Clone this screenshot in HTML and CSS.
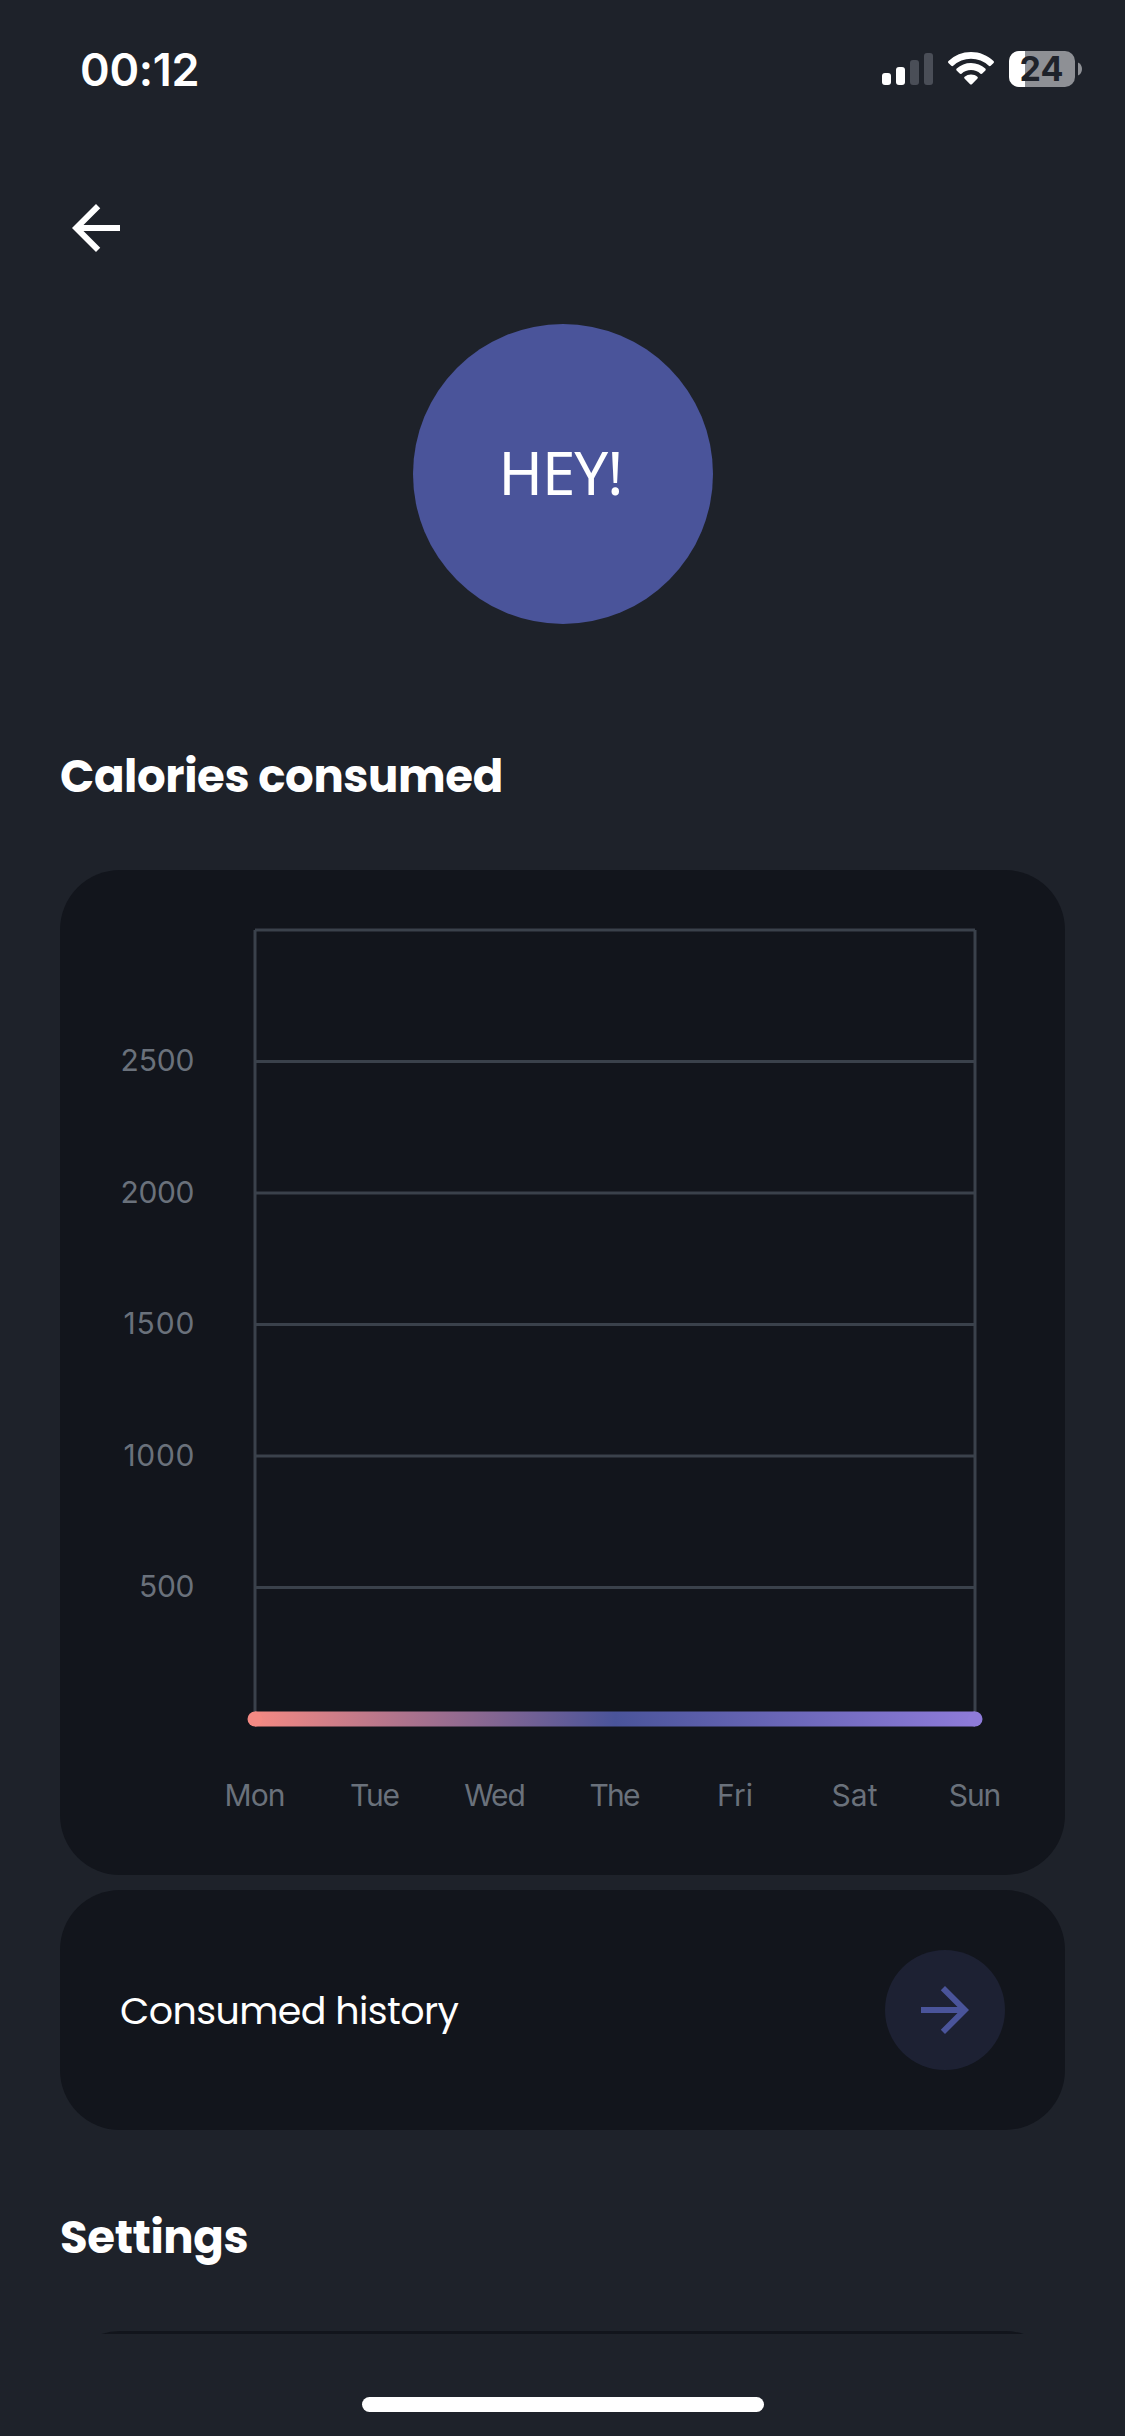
FILE: index.html
```
<!DOCTYPE html>
<html lang="en">
<head>
<meta charset="utf-8">
<title>Profile</title>
<link rel="stylesheet" href="styles.css">
</head>
<body>
<div class="screen">
  <header class="status-bar">
    <span class="time">00:12</span>
    <svg class="status-icons" width="202" height="40" viewBox="880 49 202 40">
      <g fill="#fff">
        <rect x="882" y="73" width="9" height="12" rx="3"/>
        <rect x="896" y="67" width="9" height="18" rx="3"/>
        <g fill="#4a4e57">
          <rect x="910" y="60" width="9" height="25" rx="3"/>
          <rect x="924" y="53" width="9" height="32" rx="3"/>
        </g>
        <path d="M971 52c8.700 0 16.600 3.400 22.500 9 .6.6.6 1.300.1 1.900l-2.900 2.900c-.6.6-1.300.6-1.900 0a25.800 25.800 0 0 0-35.600 0c-.6.6-1.300.6-1.900 0l-2.900-2.900c-.5-.6-.5-1.300.1-1.900A32.500 32.500 0 0 1 971 52z"/>
        <path d="M971 63c5.500 0 10.500 2.100 14.300 5.600.6.6.6 1.300.1 1.900l-3.100 3.100c-.6.6-1.200.6-1.800.1a14 14 0 0 0-19 0c-.6.5-1.200.5-1.800-.1l-3.100-3.100c-.5-.6-.5-1.300.1-1.900A21 21 0 0 1 971 63z"/>
        <path d="M971 74.500c2.500 0 4.700.8 6.400 2.200.6.500.6 1.200.1 1.700l-5.600 5.800c-.5.500-1.300.5-1.800 0l-5.600-5.800c-.5-.5-.5-1.200.1-1.700a10.200 10.200 0 0 1 6.400-2.200z"/>
      </g>
      <rect x="1009" y="51" width="66" height="36" rx="10" fill="#8e9095"/>
      <path d="M1025 51h-6a10 10 0 0 0-10 10v16a10 10 0 0 0 10 10h6z" fill="#fff"/>
      <path d="M1078 62.500c2.500 1.200 4 3.500 4 6.500s-1.500 5.300-4 6.500z" fill="#8e9095"/>
      <text class="battery-level" x="1041.500" y="81" text-anchor="middle">24</text>
    </svg>
  </header>

  <nav class="toolbar">
    <svg class="icon" viewBox="0 0 24 24" fill="#fff"><path d="M20 11H7.830l5.590-5.590L12 4l-8 8 8 8 1.410-1.410L7.830 13H20v-2z"/></svg>
  </nav>

  <main class="content">
    <div class="avatar">HEY!</div>

    <h2 class="heading calories">Calories consumed</h2>
    <section class="card chart-card">
      <svg class="chart" width="1005" height="1005" viewBox="60 870 1005 1005">
        <defs>
          <linearGradient id="week" gradientUnits="userSpaceOnUse" x1="255" y1="0" x2="975" y2="0">
            <stop offset="0" stop-color="#f48983"/>
            <stop offset=".5" stop-color="#4a549a"/>
            <stop offset="1" stop-color="#8e7bd9"/>
          </linearGradient>
        </defs>
        <path class="grid" d="M255 930H975M255 1061.500H975M255 1193H975M255 1324.500H975M255 1456H975M255 1587.500H975M255 930V1719M975 930V1719"/>
        <path d="M255 1719H975" stroke="url(#week)" stroke-width="15"/>
        <circle cx="255" cy="1719" r="7.500" fill="#f48983"/>
        <circle cx="975" cy="1719" r="7.500" fill="#8e7bd9"/>
        <g class="axis axis-y">
          <text x="194.500" y="1071" textLength="74">2500</text>
          <text x="194.500" y="1202.500" textLength="74">2000</text>
          <text x="194.500" y="1334" textLength="71">1500</text>
          <text x="194.500" y="1465.500" textLength="71">1000</text>
          <text x="194.500" y="1597" textLength="55.500">500</text>
        </g>
        <g class="axis axis-x">
          <text x="255" y="1806" textLength="61">Mon</text>
          <text x="375" y="1806" textLength="50">Tue</text>
          <text x="495" y="1806" textLength="61.500">Wed</text>
          <text x="615" y="1806" textLength="51">The</text>
          <text x="735" y="1806">Fri</text>
          <text x="854.500" y="1806">Sat</text>
          <text x="975" y="1806" textLength="52.500">Sun</text>
        </g>
      </svg>
    </section>

    <section class="card history-card">
      <span class="history-label">Consumed history</span>
      <span class="round-button">
        <svg class="icon" viewBox="0 0 24 24" fill="#4a549a"><path d="M12 4l-1.410 1.410L16.170 11H4v2h12.170l-5.580 5.590L12 20l8-8z"/></svg>
      </span>
    </section>

    <h2 class="heading settings">Settings</h2>
    <section class="card settings-card"></section>
  </main>

  <footer class="home-area"><div class="home-indicator"></div></footer>
</div>
</body>
</html>
```
FILE: styles.css
```
* { box-sizing: border-box; }
body {
  margin: 0;
  background: #1e222a;
  color: #fff;
  font-family: Poppins, Inter, "Noto Sans", sans-serif;
}
.screen {
  width: 1125px;
  height: 2436px;
  display: flex;
  flex-direction: column;
  overflow: hidden;
  background: #1e222a;
}
.status-bar {
  flex: none;
  height: 192px;
  padding: 49px 43px 0 79px;
  display: flex;
  justify-content: space-between;
  align-items: flex-start;
}
.time {
  font-family: Inter, sans-serif;
  font-size: 45px;
  line-height: 41px;
  font-weight: 600;
  letter-spacing: -0.3px;
  padding-left: 1px;
}
.battery-level {
  font: 700 34px Inter, sans-serif;
  fill: #1e222a;
}
.toolbar {
  flex: none;
  height: 132px;
  padding-left: 60px;
}
.icon {
  display: block;
  width: 72px;
  height: 72px;
}
.content {
  flex: none;
  height: 2010px;
  padding: 0 60px;
  display: flex;
  flex-direction: column;
  overflow: hidden;
}
.avatar {
  flex: none;
  align-self: center;
  width: 300px;
  height: 300px;
  padding: 0 4px 4px 0;
  border-radius: 50%;
  background: #4a549a;
  display: flex;
  align-items: center;
  justify-content: center;
  font: 60px "Noto Sans", sans-serif;
  letter-spacing: -1px;
}
.heading {
  flex: none;
  margin: 0;
  font-size: 45px;
  line-height: 60px;
  font-weight: 700;
  letter-spacing: -0.38px;
  white-space: nowrap;
}
.calories { margin: 123px 0 63px; }
.settings { margin: 78px 0 63px; }
.card {
  flex: none;
  border-radius: 60px;
  background: #12151c;
}
.chart-card { height: 1005px; }
.chart { display: block; }
.grid {
  stroke: #3a414b;
  stroke-width: 3;
  fill: none;
}
.axis {
  font-family: Inter, sans-serif;
  font-size: 30px;
  fill: #6a717b;
}
.axis-y { text-anchor: end; }
.axis-x { text-anchor: middle; }
.history-card {
  height: 240px;
  margin-top: 15px;
  padding: 0 60px;
  display: flex;
  align-items: center;
  justify-content: space-between;
}
.history-label {
  font-size: 38px;
  letter-spacing: -0.6px;
}
.round-button {
  width: 120px;
  height: 120px;
  border-radius: 50%;
  background: #1d2133;
  display: flex;
  align-items: center;
  justify-content: center;
}
.settings-card { height: 240px; }
.home-area {
  flex: 1;
  display: flex;
  justify-content: center;
  padding-top: 63px;
}
.home-indicator {
  width: 402px;
  height: 15px;
  border-radius: 8px;
  background: #fff;
}
```
